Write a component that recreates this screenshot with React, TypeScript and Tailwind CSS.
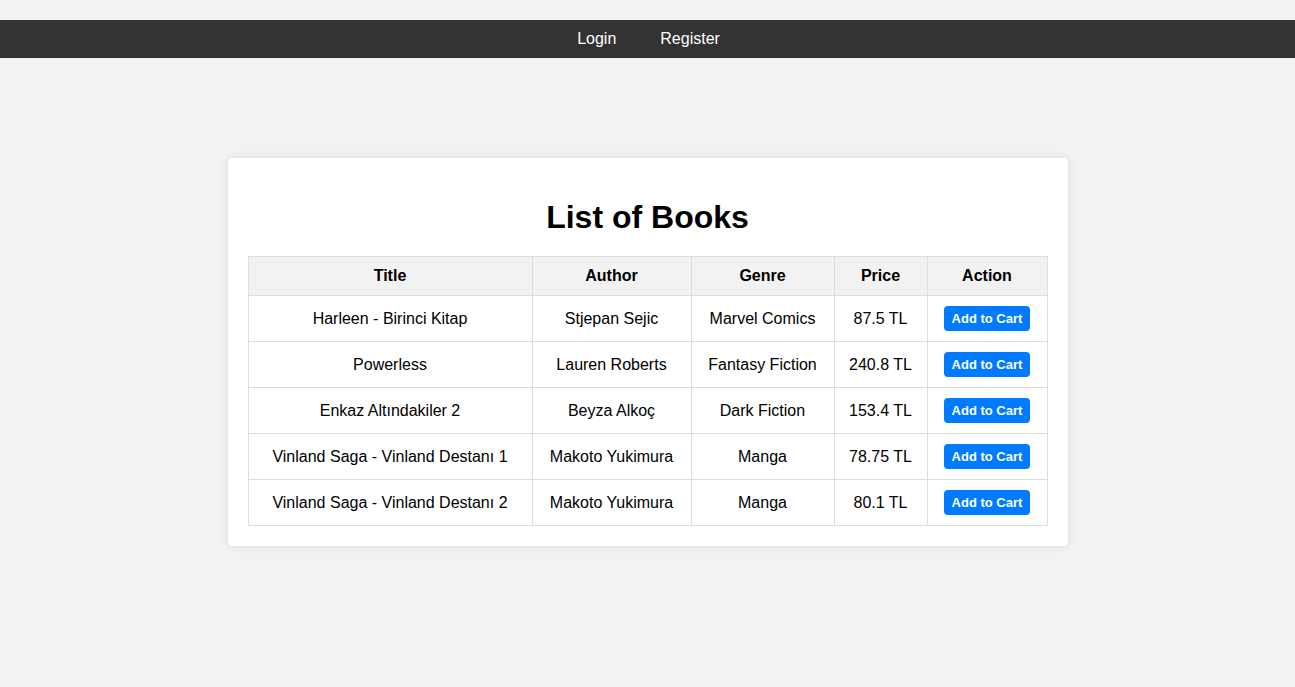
import React from 'react';

const books = [
  { title: 'Harleen - Birinci Kitap', author: 'Stjepan Sejic', genre: 'Marvel Comics', price: '87.5 TL' },
  { title: 'Powerless', author: 'Lauren Roberts', genre: 'Fantasy Fiction', price: '240.8 TL' },
  { title: 'Enkaz Altındakiler 2', author: 'Beyza Alkoç', genre: 'Dark Fiction', price: '153.4 TL' },
  { title: 'Vinland Saga - Vinland Destanı 1', author: 'Makoto Yukimura', genre: 'Manga', price: '78.75 TL' },
  { title: 'Vinland Saga - Vinland Destanı 2', author: 'Makoto Yukimura', genre: 'Manga', price: '80.1 TL' },
];

export default function App() {
  return (
    <div className="min-h-screen bg-[#f2f2f2] pt-[20px] font-['Liberation_Sans',Arial,sans-serif] text-black">
      {/* Navbar */}
      <nav className="flex justify-center gap-[44px] bg-[#333333] py-[10px] pl-[2px] text-[16px] leading-[18px] text-white">
        <a href="#">Login</a>
        <a href="#">Register</a>
      </nav>

      {/* Book list */}
      <main className="mx-auto mt-[100px] w-[840px] rounded-[5px] bg-white p-[20px] shadow-[0_0_10px_rgba(0,0,0,0.1)]">
        <h1 className="mt-[21px] mb-[20px] text-center text-[32px] leading-[37px] font-bold">List of Books</h1>
        <table className="w-full border-collapse text-center text-[16px] leading-[18px]">
          <thead>
            <tr className="bg-[#f2f2f2]">
              <th className="w-[284px] border border-[#dddddd] p-[10px] font-bold">Title</th>
              <th className="w-[159px] border border-[#dddddd] p-[10px] font-bold">Author</th>
              <th className="w-[143px] border border-[#dddddd] p-[10px] font-bold">Genre</th>
              <th className="w-[93px] border border-[#dddddd] p-[10px] font-bold">Price</th>
              <th className="border border-[#dddddd] p-[10px] font-bold">Action</th>
            </tr>
          </thead>
          <tbody>
            {books.map((b) => (
              <tr key={b.title}>
                <td className="border border-[#dddddd] p-[10px]">{b.title}</td>
                <td className="border border-[#dddddd] p-[10px]">{b.author}</td>
                <td className="border border-[#dddddd] p-[10px]">{b.genre}</td>
                <td className="border border-[#dddddd] p-[10px]">{b.price}</td>
                <td className="border border-[#dddddd] p-[10px]">
                  <button className="mx-auto block h-[25px] rounded-[4px] bg-[#007bff] px-[8px] text-[13px] leading-[15px] font-bold text-white">
                    Add to Cart
                  </button>
                </td>
              </tr>
            ))}
          </tbody>
        </table>
      </main>
    </div>
  );
}
